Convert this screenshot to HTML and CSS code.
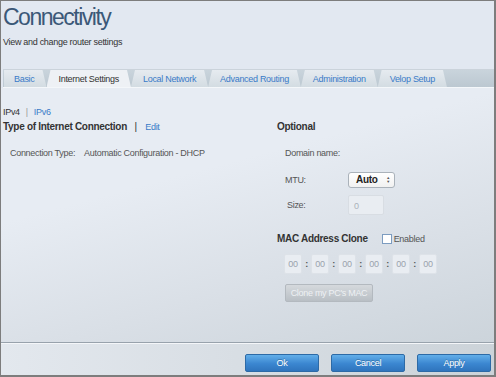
FILE: index.html
```html
<!DOCTYPE html>
<html lang="en">
<head>
    <meta charset="UTF-8">
    <meta name="viewport" content="width=device-width, initial-scale=1.0">
    <title>Connectivity</title>
    <link rel="stylesheet" href="styles.css">
</head>
<body>

    <div class="window">
        <header class="head">
            <h1>Connectivity</h1>
            <p>View and change router settings</p>
        </header>

        <nav class="tabs">
            <a class="tab first">Basic</a>
            <a class="tab active">Internet Settings</a>
            <a class="tab">Local Network</a>
            <a class="tab">Advanced Routing</a>
            <a class="tab">Administration</a>
            <a class="tab">Velop Setup</a>
        </nav>

        <div class="content">
            <div class="col col-left">
                <div class="ipver">
                    <span class="cur">IPv4</span>
                    <span class="sep">|</span>
                    <a class="link">IPv6</a>
                </div>
                <h2>Type of Internet Connection <span class="bar">|</span> <a class="link edit">Edit</a></h2>
                <div class="row conn">
                    <span class="label">Connection Type:</span>
                    <span class="value">Automatic Configuration - DHCP</span>
                </div>
            </div>

            <div class="col col-right">
                <h2 class="optional">Optional</h2>
                <div class="row field domain">
                    <span class="label">Domain name:</span>
                </div>
                <div class="row field mtu">
                    <span class="label wide">MTU:</span>
                    <div class="select">Auto <span class="arrows">&#9650;<br>&#9660;</span></div>
                </div>
                <div class="row field size-row">
                    <span class="label wide size">Size:</span>
                    <div class="input disabled">0</div>
                </div>

                <div class="mac-head">
                    <h2>MAC Address Clone</h2>
                    <label class="check"><span class="box"></span>Enabled</label>
                </div>
                <div class="mac">
                    <span class="octet">00</span><span class="colon">:</span>
                    <span class="octet">00</span><span class="colon">:</span>
                    <span class="octet">00</span><span class="colon">:</span>
                    <span class="octet">00</span><span class="colon">:</span>
                    <span class="octet">00</span><span class="colon">:</span>
                    <span class="octet">00</span>
                </div>
                <button class="clone" disabled>Clone my PC's MAC</button>
            </div>
        </div>

        <footer class="footer">
            <button class="btn">Ok</button>
            <button class="btn">Cancel</button>
            <button class="btn">Apply</button>
        </footer>
    </div>

</body>
</html>
```

FILE: styles.css
```css
* {
    margin: 0;
    padding: 0;
    box-sizing: border-box;
}
body {
    font-family: "Liberation Sans", Arial, sans-serif;
    font-size: 9px;
    letter-spacing: -0.3px;
    color: #333;
    background-color: #fff;
}
.window {
    width: 496px;
    height: 377px;
    border: 1px solid #7d7d7d;
    border-right-width: 2px;
    border-bottom-width: 2px;
    display: flex;
    flex-direction: column;
    background-color: #e2e8f1;
}
.head {
    height: 68px;
    padding: 2px 0 0 2px;
}
.head h1 {
    font-size: 23px;
    font-weight: normal;
    letter-spacing: -1.5px;
    line-height: 28px;
    color: #3b5878;
}
.head p {
    margin-top: 6px;
    color: #333;
}

/* tabs */
.tabs {
    display: flex;
    height: 19px;
    margin-left: 2px;
    padding-left: 1px;
    border-top: 1px solid #cbd3db;
    border-bottom: 1px solid #f4f7fa;
    background: linear-gradient(#c9d4dc, #bcc8d1);
}
.tab {
    display: flex;
    align-items: center;
    padding: 1px 12px 0 12px;
    white-space: nowrap;
    color: #3a7bc8;
    background: linear-gradient(#e6ebf0, #d3dce2);
    clip-path: polygon(4px 0, calc(100% - 4px) 0, 100% 100%, 0 100%);
}
.tab.first {
    padding-left: 10px;
    clip-path: polygon(0 0, calc(100% - 4px) 0, 100% 100%, 0 100%);
}
.tab.active {
    color: #333;
    background: #eef1f5;
}

/* content */
.content {
    flex: 1;
    display: flex;
    padding: 19px 0 0 2px;
    background: linear-gradient(165deg, #e7ecf3 35%, #d9dfe6 70%, #ccd4db 100%);
    border-bottom: 1px solid #98a2ac;
}
.col-left {
    width: 274px;
}
.col-right {
    flex: 1;
}
.link {
    color: #3a7bc8;
}
.ipver {
    display: flex;
    gap: 6px;
    height: 13px;
}
.ipver .sep {
    color: #999;
}
h2 {
    font-size: 10px;
    font-weight: bold;
    color: #333;
}
.col-left h2 {
    margin-top: 1px;
}
h2 .bar {
    margin: 0 6px 0 5px;
    font-weight: normal;
}
h2 .edit {
    font-weight: normal;
    font-size: 9px;
}
.row {
    display: flex;
    align-items: center;
    color: #555;
}
.conn {
    margin-top: 16px;
    padding-left: 7px;
    gap: 9px;
}
.optional {
    margin-top: 14px;
}
.field {
    padding-left: 8px;
}
.domain {
    margin-top: 7px;
    height: 28px;
}
.mtu {
    height: 25px;
}
.size-row {
    height: 26px;
}
.label.wide {
    width: 63px;
}
.label.size {
    padding-left: 2px;
}
.select {
    width: 47px;
    height: 16px;
    display: flex;
    align-items: center;
    justify-content: space-between;
    padding: 0 4px 0 7px;
    background: linear-gradient(#fff, #f1f1f1);
    border: 1px solid #aab2ba;
    border-radius: 3px;
    font-weight: bold;
    font-size: 10px;
    color: #222;
}
.arrows {
    font-size: 4px;
    line-height: 4px;
    color: #555;
}
.input {
    width: 36px;
    height: 20px;
    padding: 5px 0 0 5px;
    border: 1px solid #d8dde3;
    border-radius: 2px;
    background-color: #e9edf2;
    color: #aab2ba;
}
.mac-head {
    display: flex;
    align-items: center;
    margin-top: 15px;
}
.check {
    display: flex;
    align-items: center;
    margin-left: 14px;
    color: #555;
}
.check .box {
    width: 10px;
    height: 10px;
    margin-right: 2px;
    border: 1px solid #7c9cc0;
    background-color: #fff;
}
.mac {
    display: flex;
    align-items: center;
    margin-top: 10px;
    padding-left: 7px;
}
.octet {
    width: 18px;
    height: 20px;
    display: flex;
    align-items: center;
    justify-content: center;
    border: 1px solid #dde2e8;
    border-radius: 2px;
    background-color: #e9edf2;
    color: #9aa3ad;
}
.colon {
    width: 9px;
    text-align: center;
    color: #555;
    font-weight: bold;
}
.clone {
    display: block;
    margin: 10px 0 0 8px;
    width: 88px;
    height: 18px;
    border: 1px solid #b3b9bf;
    border-radius: 2px;
    background: linear-gradient(#d5d9dd, #b9bfc5);
    color: #eef1f4;
    font-family: inherit;
    font-size: 9px;
    letter-spacing: -0.3px;
    white-space: nowrap;
}

/* footer */
.footer {
    height: 32px;
    display: flex;
    justify-content: flex-end;
    align-items: flex-start;
    gap: 12px;
    padding: 10px 3px 0 0;
    border-top: 1px solid #f4f6f9;
    background: linear-gradient(90deg, #e3e8ee, #ccd3d9);
}
.btn {
    width: 74px;
    height: 18px;
    border: 1px solid #2d6aa6;
    border-radius: 2px;
    background: linear-gradient(#62aee9, #3b86d0 55%, #2f74bd);
    color: #fff;
    font-family: inherit;
    font-size: 9px;
    letter-spacing: -0.3px;
    text-shadow: 0 -1px 0 rgba(0, 0, 0, 0.25);
    cursor: pointer;
}
```
